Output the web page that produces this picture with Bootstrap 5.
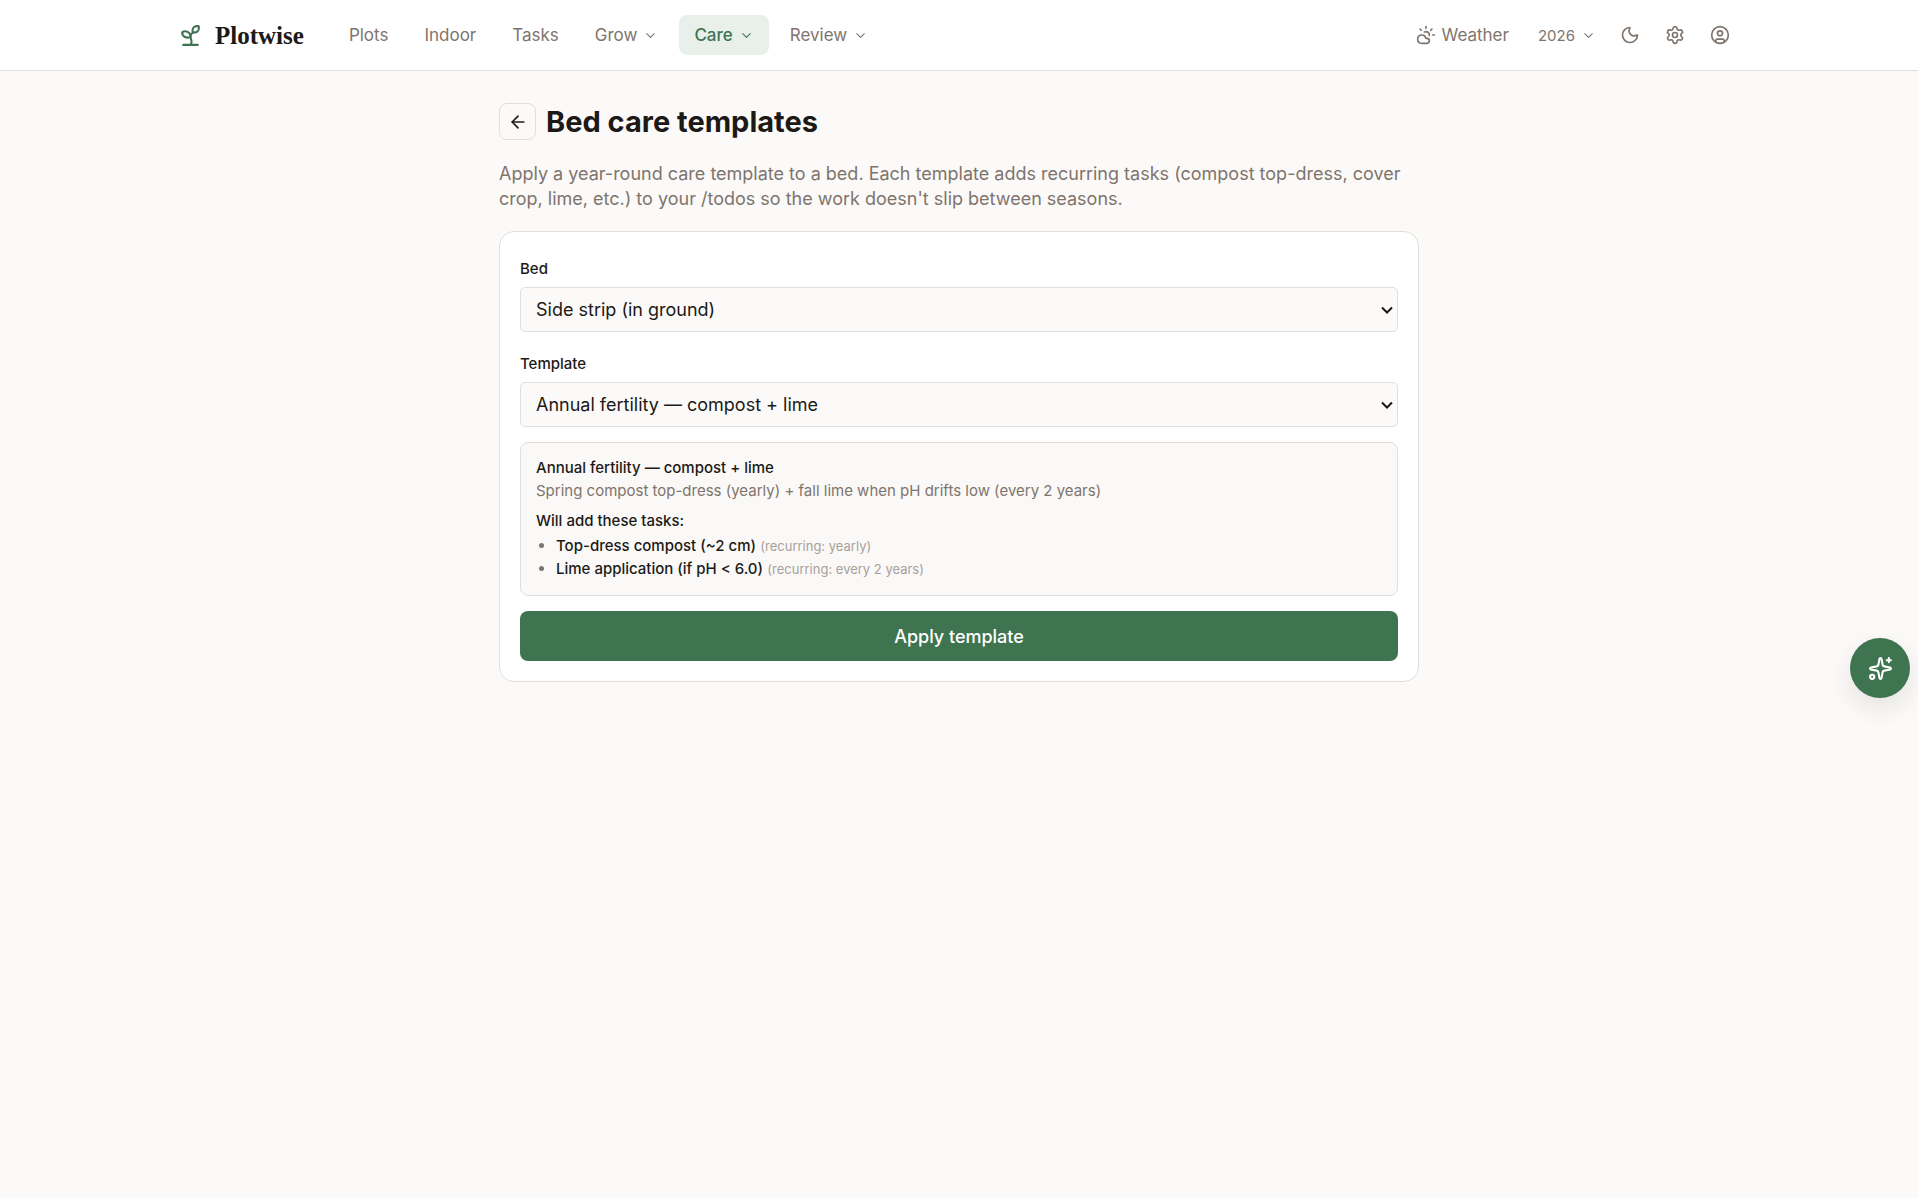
<!DOCTYPE html>
<html lang="en">
<head>
<meta charset="utf-8">
<meta name="viewport" content="width=device-width, initial-scale=1">
<title>Bed care templates – Plotwise</title>
<link href="https://cdn.jsdelivr.net/npm/bootstrap@5.3.0/dist/css/bootstrap.min.css" rel="stylesheet">
<style>
  :root { --pw-green: #3f7451; --pw-ink: #1c1917; --pw-muted: #7f746d; --pw-faint: #a8a09b; --pw-line: #e2dfda; --pw-paper: #fbfaf8; }
  body { font-family: Inter, "Open Sans", sans-serif; font-size: 18px; line-height: 25px; color: var(--pw-ink); background: var(--pw-paper); }
  .ico { fill: none; stroke: currentColor; stroke-width: 2; stroke-linecap: round; stroke-linejoin: round; width: 20px; height: 20px; flex: none; }
  .ico-lg { width: 25px; height: 25px; }
  .ico-sm { width: 15px; height: 15px; stroke-width: 1.7; }
  .top-bar { background: #fff; border-bottom: 1px solid var(--pw-line); }
  .top-inner { max-width: 1602px; height: 70px; padding: 0 20px; gap: 30px; }
  .brand-link { gap: 12px; color: var(--pw-ink); font-family: "Liberation Serif", serif; font-size: 25px; font-weight: 700; }
  .brand-link .ico { color: var(--pw-green); }
  .bar-group { gap: 6px; }
  .bar-icons { gap: 5px; }
  .bar-link { height: 40px; padding: 0 15px; gap: 6px; border: 0; border-radius: 8px; background: none; color: var(--pw-muted); font-size: 17px; }
  .bar-link.current { background: #e9f0ec; color: var(--pw-green); font-weight: 500; }
  .bar-year { padding: 0 9px; font-size: 15px; }
  .bar-icon { width: 40px; padding: 0; }
  .page-wrap { max-width: 960px; padding: 32px 20px; }
  .back-link { width: 37px; height: 37px; border: 1px solid var(--pw-line); border-radius: 8px; color: var(--pw-ink); }
  .page-title { font-size: 29px; line-height: 37px; font-weight: 700; }
  .page-head { gap: 10px; margin-bottom: 21px; }
  .intro { color: var(--pw-muted); margin-bottom: 20px; }
  .panel { background: #fff; border: 1px solid var(--pw-line); border-radius: 15px; padding: 20px; gap: 15px; }
  .field-label { font-size: 15px; line-height: 22px; font-weight: 500; padding: 6px 0 7px; }
  .field-select { height: 45px; padding: 0 30px 0 15px; border: 1px solid var(--pw-line); border-radius: 5px; color: var(--pw-ink); font-size: 18px; line-height: 25px; background-color: var(--pw-paper); background-image: url("data:image/svg+xml,%3csvg xmlns='http://www.w3.org/2000/svg' viewBox='0 0 12 8'%3e%3cpath fill='none' stroke='%231c1917' stroke-width='2' d='m1 1.500 5 5 5-5'/%3e%3c/svg%3e"); background-position: right 4px center; background-size: 12px 8px; }
  .preview { border: 1px solid var(--pw-line); border-radius: 8px; background: #faf9f7; padding: 13px 15px 15px; font-size: 15px; line-height: 23px; }
  .preview-desc { color: var(--pw-muted); margin-bottom: 7px; }
  .task-list { padding-left: 20px; margin: 2px 0 0; }
  .task-list li::marker { color: var(--pw-muted); }
  .task-note { font-size: 13px; line-height: 20px; color: var(--pw-faint); font-weight: 400; }
  .apply-btn { height: 50px; border: 0; border-radius: 8px; background: var(--pw-green); color: #fff; font-weight: 500; }
  .assist-btn { right: 8px; bottom: 500px; width: 60px; height: 60px; border: 0; background: var(--pw-green); color: #fff; box-shadow: 0 10px 25px rgba(28, 25, 23, .1); }
</style>
</head>
<body>
<header class="top-bar">
  <div class="top-inner mx-auto d-flex align-items-center">
    <a class="brand-link d-flex align-items-center text-decoration-none" href="#">
      <svg class="ico ico-lg" viewBox="0 0 24 24" aria-hidden="true"><path d="M14 9.536V7a4 4 0 0 1 4-4h1.5a.5.5 0 0 1 .5.5V5a4 4 0 0 1-4 4 4 4 0 0 0-4 4c0 2 1 3 1 5a5 5 0 0 1-1 3"/><path d="M4 9a5 5 0 0 1 8 4 5 5 0 0 1-8-4"/><path d="M5 21h14"/></svg>
      <span>Plotwise</span>
    </a>
    <nav class="bar-group d-flex align-items-center" aria-label="Main">
      <a class="bar-link d-flex align-items-center text-decoration-none" href="#">Plots</a>
      <a class="bar-link d-flex align-items-center text-decoration-none" href="#">Indoor</a>
      <a class="bar-link d-flex align-items-center text-decoration-none" href="#">Tasks</a>
      <button type="button" class="bar-link d-flex align-items-center">Grow <svg class="ico ico-sm" viewBox="0 0 24 24" aria-hidden="true"><path d="m6 9 6 6 6-6"/></svg></button>
      <button type="button" class="bar-link current d-flex align-items-center">Care <svg class="ico ico-sm" viewBox="0 0 24 24" aria-hidden="true"><path d="m6 9 6 6 6-6"/></svg></button>
      <button type="button" class="bar-link d-flex align-items-center">Review <svg class="ico ico-sm" viewBox="0 0 24 24" aria-hidden="true"><path d="m6 9 6 6 6-6"/></svg></button>
    </nav>
    <div class="bar-icons d-flex align-items-center ms-auto">
      <a class="bar-link d-flex align-items-center text-decoration-none" href="#"><svg class="ico" viewBox="0 0 24 24" aria-hidden="true"><path d="M12 2v2"/><path d="m4.93 4.93 1.41 1.41"/><path d="M20 12h2"/><path d="m19.07 4.93-1.41 1.41"/><path d="M15.947 12.65a4 4 0 0 0-5.925-4.128"/><path d="M13 22H7a5 5 0 1 1 4.900-6H13a3 3 0 0 1 0 6Z"/></svg> Weather</a>
      <button type="button" class="bar-link bar-year d-flex align-items-center">2026 <svg class="ico ico-sm" viewBox="0 0 24 24" aria-hidden="true"><path d="m6 9 6 6 6-6"/></svg></button>
      <button type="button" class="bar-link bar-icon d-flex align-items-center justify-content-center" aria-label="Dark mode"><svg class="ico" viewBox="0 0 24 24" aria-hidden="true"><path d="M20.985 12.486a9 9 0 1 1-9.473-9.472c.405-.022.617.46.402.803a6 6 0 0 0 8.268 8.268c.344-.215.825-.004.803.401"/></svg></button>
      <button type="button" class="bar-link bar-icon d-flex align-items-center justify-content-center" aria-label="Settings"><svg class="ico" viewBox="0 0 24 24" aria-hidden="true"><path d="M9.671 4.136a2.34 2.34 0 0 1 4.659 0 2.34 2.34 0 0 0 3.319 1.915 2.34 2.34 0 0 1 2.33 4.033 2.34 2.34 0 0 0 0 3.831 2.34 2.34 0 0 1-2.33 4.033 2.34 2.34 0 0 0-3.319 1.915 2.34 2.34 0 0 1-4.659 0 2.34 2.34 0 0 0-3.32-1.915 2.34 2.34 0 0 1-2.33-4.033 2.34 2.34 0 0 0 0-3.831A2.34 2.34 0 0 1 6.35 6.051a2.34 2.34 0 0 0 3.319-1.915"/><circle cx="12" cy="12" r="3"/></svg></button>
      <button type="button" class="bar-link bar-icon d-flex align-items-center justify-content-center" aria-label="Account"><svg class="ico" viewBox="0 0 24 24" aria-hidden="true"><circle cx="12" cy="12" r="10"/><circle cx="12" cy="10" r="3"/><path d="M7 20.662V19a2 2 0 0 1 2-2h6a2 2 0 0 1 2 2v1.662"/></svg></button>
    </div>
  </div>
</header>

<main class="page-wrap mx-auto">
  <div class="page-head d-flex align-items-center">
    <a class="back-link d-flex align-items-center justify-content-center" href="#" aria-label="Back"><svg class="ico" viewBox="0 0 24 24" aria-hidden="true"><path d="m12 19-7-7 7-7"/><path d="M19 12H5"/></svg></a>
    <h1 class="page-title mb-0">Bed care templates</h1>
  </div>
  <p class="intro">Apply a year-round care template to a bed. Each template adds recurring tasks (compost top-dress, cover crop, lime, etc.) to your /todos so the work doesn't slip between seasons.</p>

  <form class="panel d-flex flex-column">
    <div>
      <label class="field-label d-block" for="bed">Bed</label>
      <select class="form-select field-select" id="bed"><option>Side strip (in ground)</option></select>
    </div>
    <div>
      <label class="field-label d-block" for="template">Template</label>
      <select class="form-select field-select" id="template"><option>Annual fertility — compost + lime</option></select>
    </div>
    <section class="preview">
      <div class="fw-medium">Annual fertility — compost + lime</div>
      <p class="preview-desc">Spring compost top-dress (yearly) + fall lime when pH drifts low (every 2 years)</p>
      <div class="fw-medium">Will add these tasks:</div>
      <ul class="task-list">
        <li><span class="fw-medium">Top-dress compost (~2 cm)</span> <span class="task-note">(recurring: yearly)</span></li>
        <li><span class="fw-medium">Lime application (if pH &lt; 6.0)</span> <span class="task-note">(recurring: every 2 years)</span></li>
      </ul>
    </section>
    <button type="button" class="apply-btn w-100">Apply template</button>
  </form>
</main>

<button type="button" class="assist-btn position-fixed rounded-circle d-flex align-items-center justify-content-center" aria-label="Assistant"><svg class="ico ico-lg" viewBox="0 0 24 24" aria-hidden="true"><path d="M11.017 2.814a1 1 0 0 1 1.966 0l1.051 5.558a2 2 0 0 0 1.594 1.594l5.558 1.051a1 1 0 0 1 0 1.966l-5.558 1.051a2 2 0 0 0-1.594 1.594l-1.051 5.558a1 1 0 0 1-1.966 0l-1.051-5.558a2 2 0 0 0-1.594-1.594l-5.558-1.051a1 1 0 0 1 0-1.966l5.558-1.051a2 2 0 0 0 1.594-1.594z"/><path d="M20 2v4"/><path d="M22 4h-4"/><circle cx="4" cy="20" r="2"/></svg></button>
<script src="https://cdn.jsdelivr.net/npm/bootstrap@5.3.0/dist/js/bootstrap.bundle.min.js"></script>
</body>
</html>
